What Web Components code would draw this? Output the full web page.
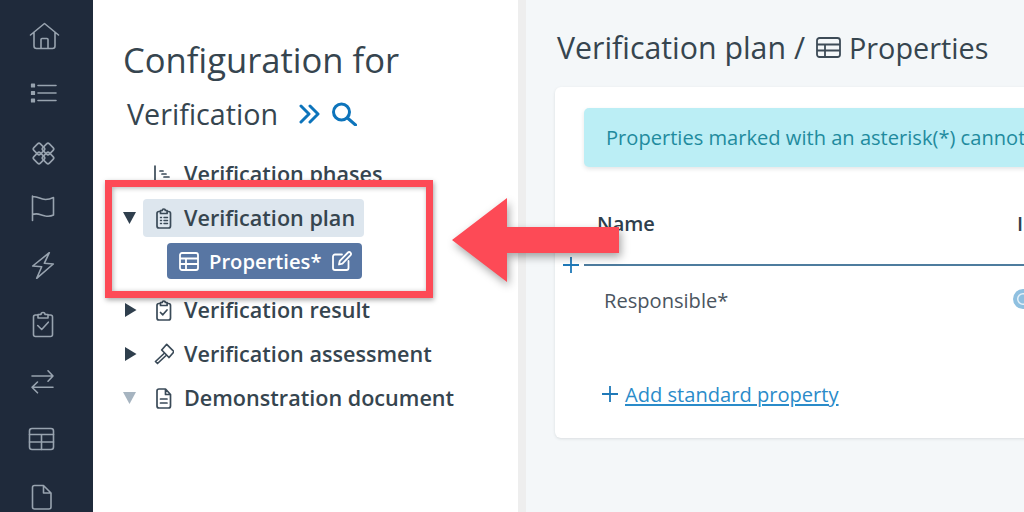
<!DOCTYPE html>
<html>
<head>
<meta charset="utf-8">
<style>
html, body { margin: 0; padding: 0; height: 100%; }
body { font-family: "Open Sans", "Liberation Sans", sans-serif; overflow: hidden; }
svg { display: block; }
</style>
</head>
<body>
<app-shell>
	<nav-rail slot="rail"></nav-rail>
	<config-panel slot="panel"></config-panel>
	<plan-view slot="main"></plan-view>
	<callout-overlay slot="overlay"></callout-overlay>
</app-shell>

<script>
function define(name, html) {
	customElements.define(name, class extends HTMLElement {
		constructor() {
			super();
			this.attachShadow({mode: 'open'}).innerHTML = html;
		}
	});
}

define('app-shell', `<style>
:host { display: flex; position: relative; width: 1024px; height: 512px; overflow: hidden; background: #f4f7f9; }
.gutter { flex: 0 0 8px; background: #eeeeee; }
</style>
<slot name="rail"></slot>
<slot name="panel"></slot>
<div class="gutter"></div>
<slot name="main"></slot>
<slot name="overlay"></slot>`);

// local coords: 40x40 box, centre of each row
define('nav-rail', `<style>
:host { display: grid; flex: 0 0 93px; box-sizing: border-box; height: 512px; overflow: hidden; background: #1f2a3b;
	padding: 8px 7px 0 0; grid-auto-rows: 57.5px; justify-items: center; align-items: center; }
svg { width: 40px; height: 40px; fill: none; stroke: #98a3af; stroke-width: 1.6; stroke-linecap: round; stroke-linejoin: round; }
</style>
<svg viewBox="0 0 40 40"><path d="M7.5 18 21.5 6.5 35.5 18M11 15v14a2.5 2.5 0 0 0 2.5 2.5h16a2.5 2.5 0 0 0 2.5-2.5V15M18 31.5V22.500a1 1 0 0 1 1-1h5a1 1 0 0 1 1 1v9"/></svg>
<svg viewBox="0 0 40 40"><path d="M15 11.500h18M15 19h18M15 26.500h18"/><path stroke-width="1.200" fill="#98a3af" d="M8.500 10h3v3h-3zM8.500 17.500h3v3h-3zM8.500 25h3v3h-3z"/></svg>
<svg viewBox="0 0 40 40" stroke-width="1.5"><g transform="translate(0 -.5)">
	<rect x="11.400" y="12.900" width="9.200" height="9.200" rx="2" transform="rotate(45 16 17.500)"/>
	<rect x="20.400" y="12.900" width="9.200" height="9.200" rx="2" transform="rotate(45 25 17.500)"/>
	<rect x="11.400" y="21.900" width="9.200" height="9.200" rx="2" transform="rotate(45 16 26.500)"/>
	<rect x="20.400" y="21.900" width="9.200" height="9.200" rx="2" transform="rotate(45 25 26.500)"/>
</g></svg>
<svg viewBox="0 0 40 40"><path d="M9.500 7v24.500M9.500 7.500c7 0 7 3 13 3 3.500 0 6-1 8-2v17.500c-2 1-4.500 1.500-8 1-6-1-7-3.500-13-1.500"/></svg>
<svg viewBox="0 0 40 40"><path d="M26.300 5.700 9.700 19l9 .7-5 11.600L30.300 17l-9-.7z"/></svg>
<svg viewBox="0 0 40 40"><path d="M15 11h-2.500a2 2 0 0 0-2 2v17.500a2 2 0 0 0 2 2h15a2 2 0 0 0 2-2V13a2 2 0 0 0-2-2H25M15 14v-3.500h3a2 2 0 0 1 4 0h3V14zM14.700 21.500l4 4 6.600-7.300"/></svg>
<svg viewBox="0 0 40 40"><path d="M9 14h21M25 8.800 30 14l-5 5.200M30 25.300H9M14.500 20 9 25.300l5.500 5.500"/></svg>
<svg viewBox="0 0 40 40"><rect x="6.500" y="9.500" width="24" height="21" rx="2.500"/><path d="M6.500 15.500h24M6.500 23h24M18.500 15.500v15"/></svg>
<svg viewBox="0 0 40 40"><path d="M11.500 8.500h9l7.500 7.500v14a2 2 0 0 1-2 2H11.500a2 2 0 0 1-2-2V10.500a2 2 0 0 1 2-2zM20.500 8.500v7.500H28"/></svg>`);

define('tree-item', `<style>
:host { display: flex; align-items: center; height: 44px; color: #36454f; font-size: 21.600px; font-weight: 600; white-space: nowrap; }
.arrow { flex: 0 0 20px; height: 14px; }
.pill { display: flex; align-items: center; gap: 10px; height: 38px; padding: 0 9px 0 11px; border-radius: 4px; }
.pill span { padding-bottom: 2px; }
:host([selected]) .pill { background: #dde6ee; }
</style>
<div class="arrow"><slot name="arrow"></slot></div>
<div class="pill"><slot name="icon"></slot><span><slot></slot></span></div>`);

define('tree-child', `<style>
:host { display: block; box-sizing: border-box; height: 48px; padding: 3px 0 0 44px; }
.pill { display: inline-flex; align-items: center; gap: 10px; height: 36px; padding: 0 10px 0 12px; border-radius: 4px;
	background: #5876a3; color: #fff; font-size: 20.200px; font-weight: 600; white-space: nowrap; }
</style>
<div class="pill"><slot name="icon"></slot><span><slot></slot></span><span><slot name="action"></slot></span></div>`);

const triangle = {
	down: '<svg slot="arrow" viewBox="0 0 14 14" width="14" height="14" fill="#2f3f4d"><path d="M0 1h13L6.500 13z"/></svg>',
	right: '<svg slot="arrow" viewBox="0 0 14 14" width="14" height="14" fill="#2f3f4d"><path d="M2 0 13.500 7 2 14z"/></svg>',
	muted: '<svg slot="arrow" viewBox="0 0 14 14" width="14" height="14" fill="#a6b4c0"><path d="M0 1h13L6.500 13z"/></svg>'
};
const ic = 'slot="icon" viewBox="0 0 20 24" width="20" height="24" fill="none" stroke="#3a4a58" stroke-width="1.700" stroke-linecap="round" stroke-linejoin="round"';
const clip = '<path d="M6 5.500H5a2 2 0 0 0-2 2v12.500a2 2 0 0 0 2 2h9.500a2 2 0 0 0 2-2V7.500a2 2 0 0 0-2-2h-1M6.500 7.500v-3h1.800a1.500 1.500 0 0 1 3 0h1.800v3z"/>';

define('config-panel', `<style>
:host { display: block; flex: 0 0 425px; box-sizing: border-box; height: 512px; padding: 38px 0 0 30px; background: #fff; color: #36454f; }
h1 { margin: 0; height: 44px; font-size: 34.600px; line-height: 44px; font-weight: 400; white-space: nowrap; }
svg { display: block; }
.sub { display: flex; align-items: center; height: 44px; margin: 9px 0 17px 4px; font-size: 28.700px; font-weight: 400; }
.sub span { margin-right: 21px; }
.sub svg { fill: none; stroke: #0d74bb; stroke-width: 3; stroke-linecap: round; stroke-linejoin: round; margin-top: 2px; }
.sub svg + svg { margin-left: 11px; }
</style>
<h1>Configuration for</h1>
<div class="sub"><span>Verification</span>
	<svg width="21" height="20" viewBox="0 0 21 20"><path d="M2 2l8 8-8 8M11 2l8 8-8 8"/></svg>
	<svg width="26" height="24" viewBox="0 0 26 24"><circle cx="10.500" cy="10" r="8"/><path d="M16.500 16l8 7"/></svg>
</div>
<tree-item><svg ${ic} stroke-width="1.500"><path d="M1 4v17.500M6 9h3M8 12h4M10 15h5"/></svg>Verification phases</tree-item>
<tree-item selected>${triangle.down}<svg ${ic}>${clip}<path stroke-width="1.400" d="M6.500 11.500h1M10 11.500h3.500M6.500 14.500h1M10 14.500h3.500M6.500 17.500h1M10 17.500h3.500"/></svg>Verification plan</tree-item>
<tree-child>
	<svg slot="icon" width="20" height="19" viewBox="0 0 20 19" fill="none" stroke="#fff" stroke-width="1.800"><rect x="1" y="1" width="18" height="17" rx="2"/><path d="M1 6.500h18M1 12h18M7 6.500V18"/></svg>
	Properties*
	<svg slot="action" width="20" height="20" viewBox="0 0 20 20" fill="none" stroke="#fff" stroke-width="1.800" stroke-linecap="round" stroke-linejoin="round"><path d="M10 3.500H3a2 2 0 0 0-2 2v11.500a2 2 0 0 0 2 2h11.500a2 2 0 0 0 2-2V10M7 13.500l.8-3.700L16 1.500a1.600 1.600 0 0 1 2.300 0l.3.300a1.600 1.600 0 0 1 0 2.300l-8.200 8.500z"/></svg>
</tree-child>
<tree-item>${triangle.right}<svg ${ic}>${clip}<path d="M6.500 14.500l2.300 2.300 4.200-4.800"/></svg>Verification result</tree-item>
<tree-item>${triangle.right}<svg ${ic} stroke-width="1.500"><path d="M7.700 8 12.700 2.300 20 9.700 15 15.500zM9.500 12 1.500 19.500l2 2L11.500 14"/></svg>Verification assessment</tree-item>
<tree-item>${triangle.muted}<svg ${ic}><path d="M5 3h6.500l5 5.500V20a2 2 0 0 1-2 2H5a2 2 0 0 1-2-2V5a2 2 0 0 1 2-2zM11.500 3v5.500h5M6.500 13h6.500M6.500 17h6.500"/></svg>Demonstration document</tree-item>`);

define('plan-view', `<style>
:host { display: block; flex: 1 1 0; min-width: 0; box-sizing: border-box; height: 512px; padding: 0 0 0 29px; overflow: hidden; color: #36454f; }
h2 { display: flex; align-items: center; gap: 8px; margin: 0 0 0 2px; height: 87px; padding-top: 8px; box-sizing: border-box; font-size: 30.300px; font-weight: 400; white-space: nowrap; }
h2 svg { margin-left: 3px; }
h2 .leaf { font-size: 28.800px; }
.card { box-sizing: border-box; width: 700px; height: 351px; padding-top: 21px; background: #fff; border-radius: 6px; box-shadow: 0 1px 3px rgba(60, 70, 80, .14); }
.alert { display: flex; align-items: center; height: 59px; margin-left: 29px; padding-left: 22px; border-radius: 5px; background: #bbeef5; color: #1f8b9e; font-size: 20.100px; white-space: nowrap; box-shadow: 0 2px 4px rgba(60, 70, 80, .14); }
.cols { display: grid; grid-template-columns: 420px 1fr; align-items: center; }
.head { height: 40px; margin: 36px 0 0 42px; font-size: 20px; font-weight: 600; color: #2f3f4d; }
.add-col { display: flex; align-items: center; gap: 5px; height: 16px; margin: 14px 0 0 8px; }
.add-col i { flex: 1; height: 1.500px; background: #4d7c9e; }
.add-col svg, .add svg { stroke: #1f79b8; stroke-width: 1.800; fill: none; }
.row { height: 30px; margin: 12px 0 0 49px; font-size: 20.100px; color: #4b5560; grid-template-columns: 409px 1fr; }
.radio { box-sizing: border-box; width: 20px; height: 20px; margin-top: -3px; border: 4px solid #8fc0e0; border-radius: 50%; background: radial-gradient(circle, #8fc0e0 0 4px, #e6f1f9 5px); }
.add { display: flex; align-items: center; gap: 7px; margin: 64px 0 0 47px; height: 30px; font-size: 20.100px; }
.add svg { margin-top: -1px; }
a { color: #2a8bc9; text-decoration: underline; }
</style>
<h2><span>Verification plan /</span><svg width="25" height="21" viewBox="0 0 25 21" fill="none" stroke="#3d4b57" stroke-width="1.800"><rect x="1" y="1" width="23" height="19" rx="2.500"/><path d="M1 7.500h23M1 13.500h23M9 7.500V20"/></svg><span class="leaf">Properties</span></h2>
<div class="card">
	<div class="alert">Properties marked with an asterisk(*) cannot</div>
	<div class="cols head"><span>Name</span><span>I</span></div>
	<div class="add-col"><svg width="16" height="16" viewBox="0 0 16 16"><path d="M8 0v16M0 8h16"/></svg><i></i></div>
	<div class="cols row"><span>Responsible*</span><div class="radio"></div></div>
	<div class="add"><svg width="16" height="16" viewBox="0 0 16 16"><path d="M8 0v16M0 8h16"/></svg><a>Add standard property</a></div>
</div>`);

// annotation painted over the screenshot, so this one sits on free coordinates
define('callout-overlay', `<style>
:host { display: block; position: absolute; inset: 0; pointer-events: none; }
.box { position: absolute; left: 105px; top: 180px; width: 328px; height: 118px; box-sizing: border-box; border: 7px solid #fd4a56;
	box-shadow: 1px 2px 5px rgba(0, 0, 0, .35), inset 1px 1px 5px rgba(0, 0, 0, .3); }
svg { position: absolute; left: 440px; top: 190px; overflow: visible; filter: drop-shadow(2px 4px 4px rgba(0, 0, 0, .35)); }
</style>
<div class="box"></div>
<svg width="190" height="100" viewBox="0 0 190 100"><path fill="#fd4a56" d="M12 50 67 8v29h112v26H67v29z"/></svg>`);
</script>
</body>
</html>
